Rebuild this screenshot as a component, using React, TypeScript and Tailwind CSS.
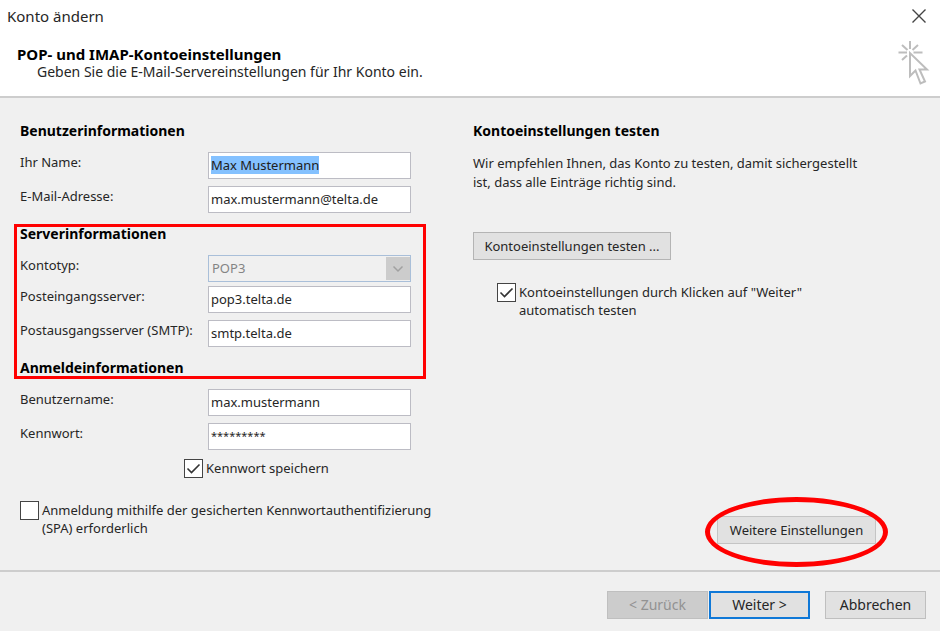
import { useEffect, useRef, useState } from 'react';
import type { ReactNode, Ref } from 'react';

const buttonBase = 'h-7 border text-center leading-none';

function Heading({ children }: { children: ReactNode }) {
  return <h2 className="text-sm leading-5 font-bold text-black">{children}</h2>;
}

type FieldProps = {
  id: string;
  label: string;
  value: string;
  masked?: boolean;
  inputRef?: Ref<HTMLInputElement>;
};

function Field({ id, label, value, masked, inputRef }: FieldProps) {
  const [text, setText] = useState(value);
  return (
    <div className="grid grid-cols-[188px_203px]">
      <label htmlFor={id} className="self-start leading-5">{label}</label>
      <input
        id={id}
        ref={inputRef}
        type="text"
        value={text}
        onChange={(e) => setText(e.target.value)}
        className={`h-[27px] w-full border border-[#bcbcc4] bg-white px-[2px] pb-[2px] outline-none selection:bg-[#84c1ff] selection:text-[#202020] ${masked ? 'text-[11px]' : 'text-[13px]'}`}
      />
    </div>
  );
}

function Check({ id, checked, children }: { id: string; checked?: boolean; children: ReactNode }) {
  const [on, setOn] = useState(!!checked);
  return (
    <div className="flex items-start gap-[3px]">
      <span className="grid shrink-0">
        <input
          id={id}
          type="checkbox"
          checked={on}
          onChange={(e) => setOn(e.target.checked)}
          className="col-start-1 row-start-1 size-[19px] appearance-none border border-[#444] bg-white"
        />
        {on && (
          <svg viewBox="0 0 19 19" className="pointer-events-none col-start-1 row-start-1 size-[19px]" fill="none" stroke="#333" strokeWidth="1.6">
            <path d="M3.5 9.5 7.5 13.5 15.5 5.5" />
          </svg>
        )}
      </span>
      <label htmlFor={id} className="leading-[18px]">{children}</label>
    </div>
  );
}

export default function App() {
  const nameRef = useRef<HTMLInputElement>(null);
  useEffect(() => {
    nameRef.current?.focus();
    nameRef.current?.select();
  }, []);

  return (
    <div className="flex min-h-screen flex-col bg-[#f0f0f0] font-['Noto_Sans',sans-serif] text-[13px] text-[#262626]">
      <header className="flex justify-between border-b-2 border-[#cdcdcd] bg-white pb-[10px]">
        <div>
          <p className="pt-[5px] pl-[7px] text-[15px] leading-[22px]">Konto ändern</p>
          <h1 className="mt-[18px] pl-[17px] text-[15px] leading-[18px] font-bold text-black">POP- und IMAP-Kontoeinstellungen</h1>
          <p className="pl-[37px] text-sm leading-[18px]">Geben Sie die E-Mail-Servereinstellungen für Ihr Konto ein.</p>
        </div>
        <div className="flex flex-col items-end pt-[8px] pr-[10px]">
          <button type="button" aria-label="Schließen" className="mr-[3px]">
            <svg viewBox="0 0 16 16" className="size-4" fill="none" stroke="#444" strokeWidth="1.4">
              <path d="M1.5 1.5 14.5 14.5M14.5 1.5 1.5 14.5" />
            </svg>
          </button>
          <svg viewBox="0 0 34 46" className="mt-[16px] h-[46px] w-[34px]" fill="none" stroke="#bdbdbd" strokeWidth="2">
            <path d="M14 1V9M2.5 12.5H11M17.5 12.5H26.5M6 5 11.5 10M22 5 16.5 10M6 20 11 15.5" />
            <path d="M14 13V36L19.5 30.5 24.5 43.5 29 41.5 23.5 29.5H31Z" />
          </svg>
        </div>
      </header>

      <main className="grid flex-1 grid-cols-[453px_1fr] pt-[23px] pl-[20px]">
        <form>
          <Heading>Benutzerinformationen</Heading>
          <div className="mt-[11px] flex flex-col gap-[7px]">
            <Field id="name" label="Ihr Name:" value="Max Mustermann" inputRef={nameRef} />
            <Field id="mail" label="E-Mail-Adresse:" value="max.mustermann@telta.de" />
          </div>

          <section className="relative mt-[11px]">
            <Heading>Serverinformationen</Heading>
            <div className="mt-[11px] grid grid-cols-[188px_203px]">
              <label htmlFor="type" className="self-start leading-5">Kontotyp:</label>
              <div className="grid">
                <select id="type" disabled className="col-start-1 row-start-1 h-[27px] w-full appearance-none border border-[#a9bfd9] bg-[#f0f0f0] px-[3px] text-[#848484] opacity-100">
                  <option>POP3</option>
                </select>
                <span className="pointer-events-none col-start-1 row-start-1 my-[2px] mr-px flex w-6 items-center justify-center justify-self-end bg-[#cccccc]">
                  <svg viewBox="0 0 12 8" className="h-2 w-3" fill="none" stroke="#a0a0a0" strokeWidth="1.5">
                    <path d="M1.5 1.5 6 6 10.5 1.5" />
                  </svg>
                </span>
              </div>
            </div>
            <div className="mt-1 flex flex-col gap-[7px]">
              <Field id="incoming" label="Posteingangsserver:" value="pop3.telta.de" />
              <Field id="outgoing" label="Postausgangsserver (SMTP):" value="smtp.telta.de" />
            </div>
            <div className="pointer-events-none absolute top-0 -left-[6px] h-[155px] w-[412px] border-3 border-[#ff0000]" />
          </section>

          <section className="mt-[11px]">
            <Heading>Anmeldeinformationen</Heading>
            <div className="mt-[11px] flex flex-col gap-[7px]">
              <Field id="user" label="Benutzername:" value="max.mustermann" />
              <Field id="password" label="Kennwort:" value="*********" masked />
            </div>
          </section>
          <div className="mt-[9px] pl-[164px]">
            <Check id="save" checked>Kennwort speichern</Check>
          </div>
          <div className="mt-[23px]">
            <Check id="spa">
              Anmeldung mithilfe der gesicherten Kennwortauthentifizierung<br />(SPA) erforderlich
            </Check>
          </div>
        </form>

        <section className="flex flex-col">
          <Heading>Kontoeinstellungen testen</Heading>
          <p className="mt-[13px] leading-[19px]">
            Wir empfehlen Ihnen, das Konto zu testen, damit sichergestellt<br />ist, dass alle Einträge richtig sind.
          </p>
          <button type="button" className={`${buttonBase} mt-[40px] w-[198px] border-[#b4b4b4] bg-[#e1e1e1]`}>Kontoeinstellungen testen ...</button>
          <div className="mt-[23px] pl-[24px]">
            <Check id="auto" checked>
              Kontoeinstellungen durch Klicken auf "Weiter"<br />automatisch testen
            </Check>
          </div>
          <div className="relative mt-auto mr-[64px] mb-[26px] self-end">
            <button type="button" className={`${buttonBase} w-[159px] border-[#c4c4c4] bg-[#e1e1e1]`}>Weitere Einstellungen</button>
            <div className="pointer-events-none absolute -top-[19px] -left-[12px] h-[70px] w-[183px] rounded-[50%] border-5 border-[#ff0000]" />
          </div>
        </section>
      </main>

      <footer className="flex justify-end border-t-2 border-[#cdcdcd] pt-[19px] pr-[14px] pb-[12px] text-sm">
        <button type="button" disabled className={`${buttonBase} w-[101px] border-[#bfbfbf] bg-[#cccccc] text-[#929292]`}>&lt; Zurück</button>
        <button type="button" className={`${buttonBase} ml-px w-[101px] border-2 border-[#0f78d7] bg-[#e1e1e1]`}>Weiter &gt;</button>
        <button type="button" className={`${buttonBase} ml-[15px] w-[101px] border-[#bfbfbf] bg-[#e1e1e1]`}>Abbrechen</button>
      </footer>
    </div>
  );
}
